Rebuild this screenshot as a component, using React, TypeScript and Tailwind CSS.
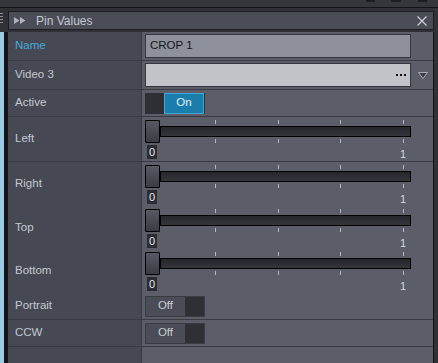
import React from "react";

type RowProps = {
  label: string;
  h: string;
  accent?: boolean;
  children?: React.ReactNode;
};

const Row: React.FC<RowProps> = ({ label, h, accent, children }) => (
  <div className={`grid grid-cols-[134px_1fr] border-b border-[#393a42] ${h}`}>
    <div
      className={`flex items-center border-r border-[#393a42] bg-[#464853] pl-[7px] ${
        accent ? "text-[#4aa9dc]" : "text-[#c4c8d0]"
      }`}
    >
      {label}
    </div>
    <div className="flex items-center bg-[#5b5d69] pl-[3px]">{children}</div>
  </div>
);

const Ticks: React.FC<{ pos: string }> = ({ pos }) => (
  <div className={`absolute left-[7px] flex w-[252px] justify-between ${pos}`}>
    {[0, 1, 2, 3, 4].map((i) => (
      <div key={i} className="h-[4px] w-[1px] bg-[#b4b8c0]" />
    ))}
  </div>
);

const Slider: React.FC = () => (
  <div className="flex h-full flex-col pt-[3px]">
    <div className="relative flex h-[23px] items-center">
      <Ticks pos="top-0" />
      <Ticks pos="bottom-0" />
      <div className="z-10 h-[23px] w-[15px] rounded-[1px] border border-black bg-gradient-to-b from-[#575965] to-[#3a3c44]" />
      <div className="h-[11px] w-[251px] border border-black bg-gradient-to-b from-[#26272c] to-[#34353b]" />
    </div>
    <div className="mt-[2px] flex items-start text-[11px] leading-[14px]">
      <div className="ml-[2px] h-[14px] w-[10px] bg-[#2b2c31] text-center text-[#e2e6ee]">0</div>
      <div className="ml-[241px] w-[10px] pt-[2px] text-center text-[#d4d8e0]">1</div>
    </div>
  </div>
);

const ToggleOn: React.FC = () => (
  <div className="flex h-[21px] w-[60px] bg-[#2e2f35]">
    <div className="w-[19px]" />
    <div className="flex w-[40px] items-center justify-center border border-[#47a6d6] bg-[#1a7eac] text-[#e8eef2]">
      On
    </div>
  </div>
);

const ToggleOff: React.FC = () => (
  <div className="flex h-[21px] w-[60px] border border-[#3a3b42] bg-[#2f3036]">
    <div className="flex w-[39px] items-center justify-center bg-[#4a4c57] text-[#c8ccd4]">Off</div>
  </div>
);

const App: React.FC = () => {
  return (
    <div className="flex h-[363px] w-[438px] flex-col overflow-hidden bg-[#35363c] font-['Liberation_Sans',Arial,sans-serif] text-[11.5px]">
      {/* window top strip */}
      <div className="flex h-[8px] shrink-0 border-b border-[#141417] bg-[#35363c]">
        <div className="ml-[366px] h-[2px] w-[9px] bg-[#1c1d20]" />
        <div className="ml-[16px] h-[2px] w-[10px] bg-[#1c1d20]" />
        <div className="ml-[17px] h-[2px] w-[9px] bg-[#1c1d20]" />
      </div>

      <div className="flex min-h-0 flex-1">
        {/* left edge */}
        <div className="flex w-[8px] shrink-0 flex-col">
          <div className="flex h-[24px] flex-col gap-[2px] bg-[#303137] pt-[5px]">
            <div className="h-[1px] w-[3px] bg-[#8a8e96]" />
            <div className="h-[1px] w-[3px] bg-[#8a8e96]" />
            <div className="h-[1px] w-[3px] bg-[#8a8e96]" />
            <div className="h-[1px] w-[3px] bg-[#8a8e96]" />
          </div>
          <div className="flex flex-1">
            <div className="w-[4px] bg-[#9ccbe4]" />
            <div className="w-[4px] bg-[#141417]" />
          </div>
        </div>

        {/* panel */}
        <div className="flex w-[426px] shrink-0 flex-col">
          <div className="h-[24px] shrink-0 bg-[#303137] pt-[3px]">
            <div className="flex h-[19px] items-center border border-[#1c1d21] bg-[#4a4c56] pl-[5px] pr-[6px]">
              <svg width="12" height="7" viewBox="0 0 12 7" className="shrink-0">
                <path d="M0 0 L5.5 3.5 L0 7 Z M6 0 L11.5 3.5 L6 7 Z" fill="#aeb2ba" />
              </svg>
              <span className="ml-[10px] text-[12px] text-[#c4c8d0]">Pin Values</span>
              <svg width="10" height="10" viewBox="0 0 10 10" className="ml-auto">
                <path d="M0.5 0.5 L9.5 9.5 M9.5 0.5 L0.5 9.5" stroke="#d0d2d6" strokeWidth="1.2" />
              </svg>
            </div>
          </div>

          <div className="flex min-h-0 flex-1 flex-col border-r border-[#141417]">
            <Row label="Name" h="h-[29px]" accent>
              <div className="flex h-[24px] w-[266px] items-center border border-[#36373e] bg-[#8e919c] pl-[4px] text-[#141518]">
                CROP 1
              </div>
            </Row>
            <Row label="Video 3" h="h-[29px]">
              <div className="flex h-[24px] w-[266px] items-center justify-end gap-[2px] border border-[#36373e] bg-[#c2c4ca] pr-[4px]">
                <div className="h-[2px] w-[2px] bg-[#111]" />
                <div className="h-[2px] w-[2px] bg-[#111]" />
                <div className="h-[2px] w-[2px] bg-[#111]" />
              </div>
              <svg width="10" height="7" viewBox="0 0 10 7" className="ml-[7px]">
                <path d="M0.5 0.5 L9.5 0.5 L5 6.5 Z" fill="#3c3e46" stroke="#a8acb4" strokeWidth="1" />
              </svg>
            </Row>
            <Row label="Active" h="h-[27px]">
              <ToggleOn />
            </Row>
            <Row label="Left" h="h-[45px]">
              <Slider />
            </Row>
            <Row label="Right" h="h-[44px]">
              <Slider />
            </Row>
            <Row label="Top" h="h-[43px]">
              <Slider />
            </Row>
            <Row label="Bottom" h="h-[44px]">
              <Slider />
            </Row>
            <Row label="Portrait" h="h-[27px]">
              <ToggleOff />
            </Row>
            <Row label="CCW" h="h-[27px]">
              <ToggleOff />
            </Row>
            <div className="grid flex-1 grid-cols-[134px_1fr]">
              <div className="border-r border-[#393a42] bg-[#464853]" />
              <div className="bg-[#5b5d69]" />
            </div>
          </div>
        </div>

        {/* right edge */}
        <div className="flex-1 bg-[#303137]" />
      </div>
    </div>
  );
};

export default App;
